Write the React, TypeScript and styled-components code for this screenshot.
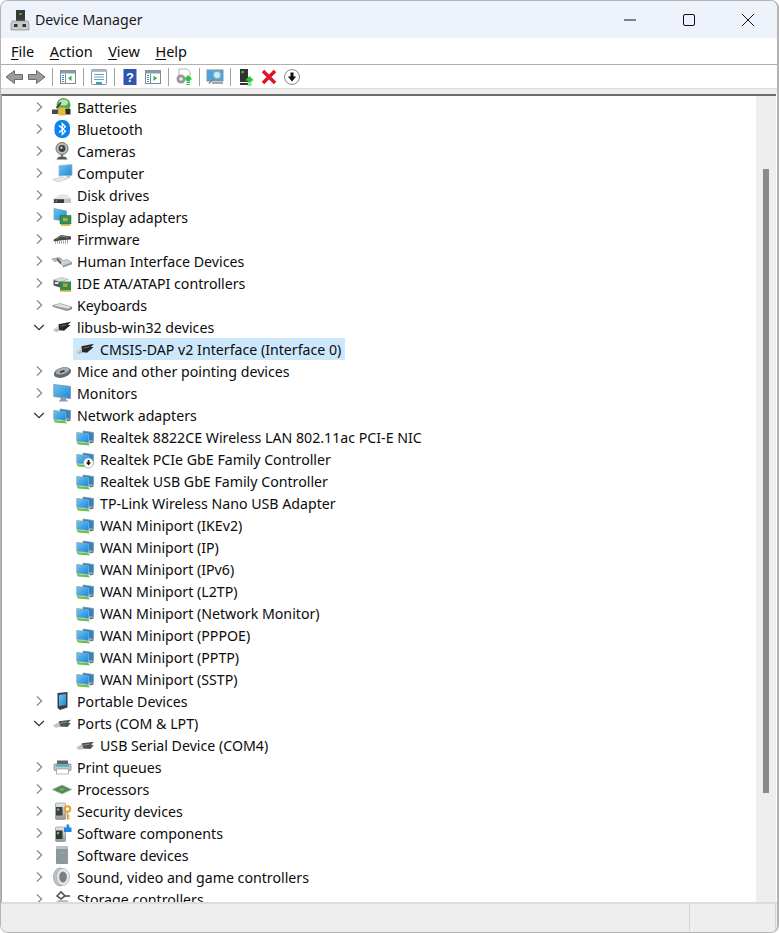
import React from "react";
import styled, { createGlobalStyle } from "styled-components";

const Global = createGlobalStyle`
  html, body { margin: 0; padding: 0; background: #fff; }
  #root { width: 779px; height: 933px; }
`;

const Window = styled.div`
  box-sizing: border-box; width: 779px; height: 933px; display: flex; flex-direction: column;
  border: 1px solid #b4b4b4; border-width: 1px 2px 1px 1px; border-radius: 8px; overflow: hidden;
  background: #fff; color: #0c0c0c;
  font-family: "Noto Sans", "Open Sans", sans-serif; font-size: 14.18px;
`;
const TitleBar = styled.div`
  height: 37px; flex: none; background: #eef2fb; display: flex; align-items: center; padding-left: 9px;
`;
const TitleText = styled.span`
  margin-left: 5px; font-size: 14.2px; color: #1a1a1a;
`;
const Caption = styled.div`
  margin-left: auto; display: flex;
`;
const CaptionButton = styled.div`
  width: 59px; height: 37px; display: flex; align-items: center; justify-content: center;
`;
const MenuBar = styled.div`
  height: 26px; flex: none; border-bottom: 1px solid #b0b0b0; display: flex; padding: 1px 0 0 10px; box-sizing: content-box; align-items: center; gap: 15.5px;
  margin-top: -1px;
`;
const MenuItem = styled.span`
  font-size: 14.5px; line-height: 26px;
  u { text-underline-offset: 2px; }
`;
const ToolBar = styled.div`
  height: 23px; flex: none; display: flex; align-items: center; padding-left: 1px;
`;
const ToolButton = styled.div`
  width: 23px; height: 23px; display: flex; align-items: center; justify-content: center;
`;
const ToolSep = styled.div`
  width: 8px; display: flex; justify-content: center;
  &::before { content: ""; width: 1px; height: 18px; background: #a0a0a0; }
`;
const Band = styled.div`
  height: 6px; flex: none; background: #eeeeee; border-top: 1px solid #dcdcdc; box-sizing: border-box;
`;
const Content = styled.div`
  flex: 1; min-height: 0; display: flex; border-top: 2px solid #6e6e6e; border-left: 1px solid #a8a8a8; margin-right: 1px;
`;
const Tree = styled.div`
  flex: 1; min-width: 0; overflow: hidden; display: flex; flex-direction: column;
`;
const Row = styled.div<{ $level: number }>`
  height: 22px; flex: none; display: flex; align-items: center;
  padding-left: ${(p) => (p.$level === 0 ? 28 : 71)}px;
`;
const Chevron = styled.span`
  width: 17px; height: 22px; display: flex; align-items: center; justify-content: center; margin-right: 3px;
`;
const Label = styled.div<{ $selected?: boolean }>`
  height: 22px; display: flex; align-items: center; gap: 6px; padding: 0 4px 0 3px; white-space: nowrap;
  background: ${(p) => (p.$selected ? "#cde8fb" : "transparent")};
`;
const Scroll = styled.div`
  width: 20px; flex: none; background: #eeeeee; display: flex; justify-content: center;
`;
const Thumb = styled.div`
  width: 6px; height: 624px; margin-top: 73px; background: #8a8a8a;
`;
const Status = styled.div`
  height: 30px; flex: none; background: #eeeeee; border-top: 2px solid #dcdcdc; display: flex; box-sizing: border-box; justify-content: flex-end; padding-bottom: 1px;
`;
const StatusCell = styled.div<{ $w: number }>`
  width: ${(p) => p.$w}px; border-left: 1px solid #d2d2d2; box-sizing: border-box;
`;

const S = styled.svg`
  display: block; flex: none; overflow: visible;
`;

const Defs = () => (
  <defs>
    <linearGradient id="blue" x1="0" y1="0" x2="1" y2="1">
      <stop offset="0" stopColor="#6cc6f5" />
      <stop offset="1" stopColor="#1c86d8" />
    </linearGradient>
    <linearGradient id="metal" x1="0" y1="0" x2="0" y2="1">
      <stop offset="0" stopColor="#e8eaec" />
      <stop offset="1" stopColor="#8f969b" />
    </linearGradient>
  </defs>
);

const Net = () => (
  <>
    <path d="M7 3 17.5 4.5V13L7 12Z" fill="#2a86c8" stroke="#7f9aab" strokeWidth=".8" />
    <path d="M.8 4.5 12.5 6V14.5L.8 13.2Z" fill="url(#blue)" stroke="#8ba3b2" strokeWidth=".9" />
    <path d="M.5 14 12.5 15.2 14 17.5 2 16.5Z" fill="#62c24a" />
    <path d="M13 13.5l4.5-.3v1.600L14 15.500Z" fill="#5e7482" />
  </>
);
const Usb = () => (
  <>
    <path d="M0 11.800 6.500 7.200 10 7.500v4.300L3 14Z" fill="#b5b7b9" />
    <path d="M1.500 11.800 7 8.400" stroke="#eee" strokeWidth=".9" />
    <path d="M5.500 6.300 18 3.800 14.800 7 17.600 7 11 12.800 6.200 12Z" fill="#232527" />
    <path d="M7.500 8.300 13.500 6.700" stroke="#777a7d" strokeWidth=".9" />
  </>
);
const PortI = () => (
  <>
    <path d="M0 11.800 6.500 7.500H10V12.500L3 13.800Z" fill="#c0c2c4" />
    <path d="M5.800 7.200 18 5.800 15 8.800 17.800 9 14.500 13 7.500 12.500Z" fill="#505356" />
    <path d="M7.500 9.200 13.500 8.200" stroke="#94979a" strokeWidth=".9" />
  </>
);
const Card = () => (
  <>
    <path d="M.5 6 9 3.500 15.500 5.500 7 8Z" fill="#dcdcdc" stroke="#9a9a9a" strokeWidth=".5" />
    <path d="M.5 6v5.500L7 13.500V8Z" fill="#55585a" />
    <rect x="2" y="8" width="3.500" height="2" fill="#e6e6e6" />
    <rect x="7" y="7.500" width="11" height="8.500" fill="#2d8f4c" />
    <rect x="10" y="9.500" width="4.500" height="3.500" fill="#c69a45" />
    <path d="M7 16h11v1.700H7Z" fill="#d5a52a" />
  </>
);

const icons: Record<string, React.ReactNode> = {
  battery: (
    <>
      <circle cx="10.500" cy="7" r="7" fill="#4fae44" />
      <ellipse cx="10.500" cy="4.500" rx="4.500" ry="3" fill="#e3e6e3" opacity=".8" />
      <path d="M-1 11.500h6.500v4.500H-1Z" fill="#4a4a4a" />
      <path d="M5.500 9.500h7v8h-7Z" fill="#e5b93a" />
      <path d="M12.500 11h5v5.500h-5Z" fill="#2c2c2c" />
      <path d="M3.500 10 8 4.500" stroke="#333" strokeWidth="1.500" />
    </>
  ),
  bluetooth: (
    <>
      <rect x="1.500" y="0" width="15.500" height="18" rx="7" fill="#0a84f0" />
      <path d="M6 5.600 12.400 11.300 9.300 14.400V3.600L12.400 6.700 6 12.400" fill="none" stroke="#fff" strokeWidth="1.300" />
    </>
  ),
  camera: (
    <>
      <circle cx="9" cy="6.500" r="6" fill="#bcbcbc" stroke="#6e6e6e" />
      <circle cx="9" cy="6.500" r="3.400" fill="#3f3f3f" />
      <circle cx="8.400" cy="5.800" r="1.200" fill="#a8d4ee" />
      <path d="M9 12v3" stroke="#777" strokeWidth="2.400" />
      <path d="M3.500 17.500h11l-2-2.800h-7Z" fill="#56595c" />
    </>
  ),
  computer: (
    <>
      <path d="M6 1.500 19 .5V11.500L6 12Z" fill="url(#blue)" stroke="#a5bac6" strokeWidth=".8" />
      <path d="M-.5 15.500 9 13 14 15 5 18Z" fill="#e6e6e6" stroke="#bbb" strokeWidth=".5" />
      <path d="M13.500 12h3.500v2.200h-3.500Z" fill="#c2c5c7" />
    </>
  ),
  disk: (
    <>
      <path d="M.5 13 6.500 9H14L18 13Z" fill="#e6e6e6" stroke="#c8c8c8" strokeWidth=".4" />
      <path d="M.5 13H18V17H.5Z" fill="#c2c2c2" />
      <path d="M1 13.300h10V17H1Z" fill="#3a3a3a" />
      <path d="M2.500 14.600h1.700v1.100H2.500Z" fill="#6fd04a" />
    </>
  ),
  display: (
    <>
      <path d="M1 .5 13.500 3V13L1 11.500Z" fill="url(#blue)" stroke="#7ea1b5" strokeWidth=".8" />
      <path d="M7 7.500h11v8.500H7Z" fill="#2e9450" stroke="#1e6b38" strokeWidth=".5" />
      <rect x="10" y="10" width="4.500" height="3.200" fill="#c9a24a" />
      <path d="M8 16.200h9v1.500H8Z" fill="#d5a52a" />
    </>
  ),
  chip: (
    <>
      <path d="M.5 9.800 8 5 18 6.500V9.500L8.500 10.200 1 11.500Z" fill="#444648" />
      <path d="M2.500 11.500V13.800M4.500 11V13.800M6.500 10.500V13.800M8.500 10.500V13.800M10.500 10.500V13.800M12.500 10.300V13.800M14.500 10V13.300" stroke="#a4a6a8" strokeWidth="1" />
      <path d="M3 9.200 8 6.300 15 7.300" fill="none" stroke="#909295" strokeWidth=".8" />
    </>
  ),
  hid: (
    <>
      <path d="M-1 7 6 5.500 9 7.500 1.500 9.600Z" fill="#b4c2ca" stroke="#74808a" strokeWidth=".6" />
      <path d="M5 9.500 14 7.500 19 10.500 10 13.800Z" fill="#cfd2d4" stroke="#848c92" strokeWidth=".6" />
      <path d="M10 13.800 19 10.500V12.200L10 15.600Z" fill="#8b98a0" />
      <path d="M4 6.500 8 11.500" stroke="#55595c" strokeWidth="1.600" />
    </>
  ),
  ide: <Card />,
  keyboard: (
    <>
      <path d="M-.5 9.500 7 7.500 19 11 15 13Z" fill="#e0e0e0" stroke="#8b8b8b" strokeWidth=".6" />
      <path d="M-.5 9.800 15 13.200 14 15 0 11Z" fill="#8f9295" />
      <path d="M15 13.200 19 11V13L14.200 15Z" fill="#7b7e81" />
    </>
  ),
  usb: <Usb />,
  mouse: (
    <>
      <ellipse cx="9.500" cy="10.500" rx="8.800" ry="5" transform="rotate(-16 9.500 10.500)" fill="#62686c" />
      <ellipse cx="9.500" cy="9" rx="7" ry="3.200" transform="rotate(-16 9.500 9)" fill="#a6acb1" />
      <path d="M7 10.200 11.500 8.800" stroke="#2f3133" strokeWidth="1.500" />
    </>
  ),
  monitor: (
    <>
      <path d="M.8 .5 17.500 2.500V14.500L.8 12.500Z" fill="url(#blue)" stroke="#7f97a6" strokeWidth=".9" />
      <path d="M7.500 13.500h5.500v2l2.500 2H5.500l2-2Z" fill="#8e9aa2" />
    </>
  ),
  net: <Net />,
  netdown: (
    <>
      <Net />
      <circle cx="12.500" cy="13" r="5" fill="#fff" stroke="#aaa" strokeWidth=".8" />
      <path d="M11.600 10h1.800v2.600h1.700L12.500 15.600 9.900 12.600h1.700Z" fill="#111" />
    </>
  ),
  portable: (
    <>
      <path d="M4.500 1 14.500 0V15.500L7 18 4.500 16Z" fill="#3a3f44" />
      <path d="M6 3 13 2V13L6 14Z" fill="url(#blue)" />
    </>
  ),
  port: <PortI />,
  printer: (
    <>
      <rect x="4" y="2.500" width="11" height="4" fill="#5f6366" />
      <rect x="1" y="6" width="17" height="6.500" rx="1" fill="#c4c6c8" stroke="#6a6a6a" strokeWidth=".6" />
      <rect x="3" y="6.600" width="13" height="2" fill="#2fb6c6" />
      <rect x="3.500" y="11" width="12" height="5" fill="#fff" stroke="#8a8a8a" strokeWidth=".6" />
    </>
  ),
  processor: (
    <>
      <path d="M-.5 9.500 9 5.200 18.500 9.500 9 13.800Z" fill="#3e9348" stroke="#a0a0a0" strokeWidth=".9" />
      <path d="M5.500 9.500 9 8 12.500 9.500 9 11Z" fill="#a39a58" />
    </>
  ),
  security: (
    <>
      <rect x="2.500" y="1" width="10" height="16.500" rx="1" fill="url(#metal)" stroke="#7d8488" strokeWidth=".6" />
      <rect x="3" y="5" width="6.500" height="8.500" fill="#3f3f3f" />
      <rect x="4" y="6.500" width="2.200" height="2.200" fill="#53d05a" />
      <circle cx="14.500" cy="7" r="2.800" fill="none" stroke="#e0a32e" strokeWidth="2" />
      <path d="M14.500 9.500v8M14.500 14h2M14.500 16.500h2" stroke="#e0a32e" strokeWidth="1.600" />
    </>
  ),
  component: (
    <>
      <rect x="2.500" y="3" width="10" height="14.500" rx="1" fill="url(#metal)" stroke="#7d8488" strokeWidth=".6" />
      <rect x="3" y="6.500" width="6.500" height="8.500" fill="#343434" />
      <rect x="4" y="8" width="2.200" height="2.200" fill="#53d05a" />
      <path d="M11 3.500h2.500V.5h2.800v3H18.500v4.500H11Z" fill="#1e88e0" />
    </>
  ),
  software: (
    <>
      <rect x="3" y="0" width="12" height="18" rx="1" fill="#8e979e" />
      <rect x="3" y="0" width="12" height="3" rx="1" fill="#bcc3c8" />
      <rect x="8" y="6" width="2" height="1.500" fill="#4bd3e8" />
    </>
  ),
  sound: (
    <>
      <ellipse cx="7" cy="9" rx="6.500" ry="9" fill="#c0c4c7" stroke="#7d8488" strokeWidth=".6" />
      <ellipse cx="10" cy="9" rx="6.500" ry="8.500" fill="#e6e8ea" stroke="#9aa0a4" strokeWidth=".6" />
      <ellipse cx="10" cy="9" rx="3.800" ry="5.500" fill="#7a8084" />
    </>
  ),
  storage: (
    <>
      <path d="M4 6 8 2 12 6 8 9Z" fill="none" stroke="#555" strokeWidth="1.600" />
      <path d="M11 6h6" stroke="#555" strokeWidth="1.600" />
      <path d="M1 13 6 10H14L17 13V16H1Z" fill="#bbb" />
    </>
  ),
};

const Icon = ({ n }: { n: string }) => (
  <S width={18} height={18} viewBox="0 0 18 18">
    <Defs />
    {icons[n]}
  </S>
);

const ChevronIcon = ({ open }: { open: boolean }) => (
  <S width={12} height={12} viewBox="0 0 12 12">
    <path
      d={open ? "M1.200 4 6 8.600 10.800 4" : "M4 1.400 8.600 6 4 10.600"}
      fill="none"
      stroke={open ? "#333" : "#8a8a8a"}
      strokeWidth="1.300"
    />
  </S>
);

type Item = { t: string; i: string; l?: number; open?: boolean; sel?: boolean };
const rows: Item[] = [
  { t: "Batteries", i: "battery" },
  { t: "Bluetooth", i: "bluetooth" },
  { t: "Cameras", i: "camera" },
  { t: "Computer", i: "computer" },
  { t: "Disk drives", i: "disk" },
  { t: "Display adapters", i: "display" },
  { t: "Firmware", i: "chip" },
  { t: "Human Interface Devices", i: "hid" },
  { t: "IDE ATA/ATAPI controllers", i: "ide" },
  { t: "Keyboards", i: "keyboard" },
  { t: "libusb-win32 devices", i: "usb", open: true },
  { t: "CMSIS-DAP v2 Interface (Interface 0)", i: "usb", l: 1, sel: true },
  { t: "Mice and other pointing devices", i: "mouse" },
  { t: "Monitors", i: "monitor" },
  { t: "Network adapters", i: "net", open: true },
  { t: "Realtek 8822CE Wireless LAN 802.11ac PCI-E NIC", i: "net", l: 1 },
  { t: "Realtek PCIe GbE Family Controller", i: "netdown", l: 1 },
  { t: "Realtek USB GbE Family Controller", i: "net", l: 1 },
  { t: "TP-Link Wireless Nano USB Adapter", i: "net", l: 1 },
  { t: "WAN Miniport (IKEv2)", i: "net", l: 1 },
  { t: "WAN Miniport (IP)", i: "net", l: 1 },
  { t: "WAN Miniport (IPv6)", i: "net", l: 1 },
  { t: "WAN Miniport (L2TP)", i: "net", l: 1 },
  { t: "WAN Miniport (Network Monitor)", i: "net", l: 1 },
  { t: "WAN Miniport (PPPOE)", i: "net", l: 1 },
  { t: "WAN Miniport (PPTP)", i: "net", l: 1 },
  { t: "WAN Miniport (SSTP)", i: "net", l: 1 },
  { t: "Portable Devices", i: "portable" },
  { t: "Ports (COM & LPT)", i: "port", open: true },
  { t: "USB Serial Device (COM4)", i: "port", l: 1 },
  { t: "Print queues", i: "printer" },
  { t: "Processors", i: "processor" },
  { t: "Security devices", i: "security" },
  { t: "Software components", i: "component" },
  { t: "Software devices", i: "software" },
  { t: "Sound, video and game controllers", i: "sound" },
  { t: "Storage controllers", i: "storage" },
];

const T = ({ children }: { children: React.ReactNode }) => (
  <S width={18} height={18} viewBox="0 0 18 18">
    {children}
  </S>
);

const Pane = ({ arrow }: { arrow: "l" | "r" }) => (
  <T>
    <rect x="1.500" y="2.500" width="15" height="13" fill="#fff" stroke="#7a8a96" />
    <rect x="1.500" y="2.500" width="15" height="3" fill="#8d9aa4" />
    <path d="M6.500 6v9" stroke="#7a8a96" />
    <path d="M3 7.500h2M3 9.500h2M3 11.500h2M3 13.500h2" stroke="#3d8fd0" />
    <path d={arrow === "l" ? "M12.500 7.500v5.500L9 10.300Z" : "M9.500 7.500v5.500l3.500-2.700Z"} fill="#2bb34a" />
  </T>
);
const Arrow = ({ flip }: { flip?: boolean }) => (
  <T>
    <path
      d={flip ? "M.5 6.500h8V2.500L17 9l-8.500 6.500v-4h-8Z" : "M17.500 6.500h-8V2.500L1 9l8.500 6.500v-4h8Z"}
      fill="#9c9c9c"
      stroke="#6a6a6a"
    />
  </T>
);

export default function App() {
  return (
    <>
      <Global />
      <Window>
        <TitleBar>
          <S width={20} height={22} viewBox="0 0 20 22">
            <rect x="6" y="1" width="9" height="12" fill="#3a3a3a" />
            <rect x="9.500" y="4" width="2" height="2" fill="#42c95a" />
            <path d="M2 12h16l1 3v6H1v-6Z" fill="#c9c9c9" stroke="#8e8e8e" strokeWidth=".7" />
            <rect x="4" y="15" width="3.500" height="3" fill="#333" />
            <rect x="12.500" y="15" width="3.500" height="3" fill="#333" />
          </S>
          <TitleText>Device Manager</TitleText>
          <Caption>
            <CaptionButton>
              <S width={12} height={12} viewBox="0 0 12 12">
                <path d="M0 6h12" stroke="#111" />
              </S>
            </CaptionButton>
            <CaptionButton>
              <S width={12} height={12} viewBox="0 0 12 12">
                <rect x=".5" y=".5" width="11" height="11" rx="1.500" fill="none" stroke="#111" />
              </S>
            </CaptionButton>
            <CaptionButton>
              <S width={12} height={12} viewBox="0 0 12 12">
                <path d="M0 0 12 12M12 0 0 12" stroke="#111" />
              </S>
            </CaptionButton>
          </Caption>
        </TitleBar>
        <MenuBar>
          <MenuItem><u>F</u>ile</MenuItem>
          <MenuItem><u>A</u>ction</MenuItem>
          <MenuItem><u>V</u>iew</MenuItem>
          <MenuItem><u>H</u>elp</MenuItem>
        </MenuBar>
        <ToolBar>
          <ToolButton><Arrow /></ToolButton>
          <ToolButton><Arrow flip /></ToolButton>
          <ToolSep />
          <ToolButton><Pane arrow="l" /></ToolButton>
          <ToolSep />
          <ToolButton>
            <T>
              <rect x="1.500" y="1.500" width="15" height="15" rx="1" fill="#fff" stroke="#8a949c" />
              <rect x="1.500" y="1.500" width="15" height="2.500" fill="#b4bbc0" />
              <path d="M4 6.500h10M4 9h10M4 11.500h10" stroke="#6a9fc8" />
              <path d="M6 15h6" stroke="#2aa3df" strokeWidth="2" />
            </T>
          </ToolButton>
          <ToolSep />
          <ToolButton>
            <T>
              <rect x="2.500" y="1" width="13" height="16" fill="#2f55b0" />
              <text x="9" y="14" textAnchor="middle" fontSize="13" fontWeight="700" fill="#fff" fontFamily="Liberation Sans">?</text>
            </T>
          </ToolButton>
          <ToolButton><Pane arrow="r" /></ToolButton>
          <ToolSep />
          <ToolButton>
            <T>
              <path d="M4 1h8l3 3v8H4Z" fill="#fff" stroke="#b4b4b4" />
              <circle cx="6" cy="11" r="4.500" fill="#999" />
              <circle cx="6" cy="11" r="1.700" fill="#eee" />
              <path d="M13 7l4.500 4.500h-2.500v2h-3.500v-2H9Z" fill="#2bc437" />
              <path d="M11.500 14.500h3.500M11.500 16.500h3.500" stroke="#2bc437" />
            </T>
          </ToolButton>
          <ToolSep />
          <ToolButton>
            <T>
              <rect x="1" y="2" width="16" height="11" fill="#49a5e3" stroke="#7f97a6" />
              <circle cx="11" cy="7" r="3.800" fill="#c8e7f8" stroke="#8aa" />
              <path d="M8.500 9.500 3 15.500" stroke="#888" strokeWidth="1.500" />
              <path d="M6 15h11" stroke="#888" strokeWidth="1.500" />
            </T>
          </ToolButton>
          <ToolSep />
          <ToolButton>
            <T>
              <rect x="3" y="1" width="8" height="13" fill="#333" />
              <rect x="4.500" y="3" width="2.200" height="2.200" fill="#42c95a" />
              <path d="M3 15h8v2H3Z" fill="#333" />
              <path d="M12.500 8l4.500 4.500h-2.500v1.500h-4v-1.500H8Z" fill="#2bc437" />
              <path d="M10.500 15h4M10.500 17h4" stroke="#2bc437" />
            </T>
          </ToolButton>
          <ToolButton>
            <T>
              <path d="M3 3 15 15M15 3 3 15" stroke="#dc1424" strokeWidth="3.400" />
            </T>
          </ToolButton>
          <ToolButton>
            <T>
              <circle cx="9" cy="9" r="7.500" fill="#fff" stroke="#8a8a8a" />
              <path d="M7.500 4.500h3v4h2.700L9 13.500 4.800 8.500h2.700Z" fill="#111" />
            </T>
          </ToolButton>
        </ToolBar>
        <Band />
        <Content>
          <Tree>
            {rows.map((r) => (
              <Row key={r.t} $level={r.l ?? 0}>
                {!r.l && (
                  <Chevron>
                    <ChevronIcon open={!!r.open} />
                  </Chevron>
                )}
                <Label $selected={r.sel}>
                  <Icon n={r.i} />
                  <span>{r.t}</span>
                </Label>
              </Row>
            ))}
          </Tree>
          <Scroll>
            <Thumb />
          </Scroll>
        </Content>
        <Status>
          <StatusCell $w={86} />
          <StatusCell $w={2} />
        </Status>
      </Window>
    </>
  );
}
